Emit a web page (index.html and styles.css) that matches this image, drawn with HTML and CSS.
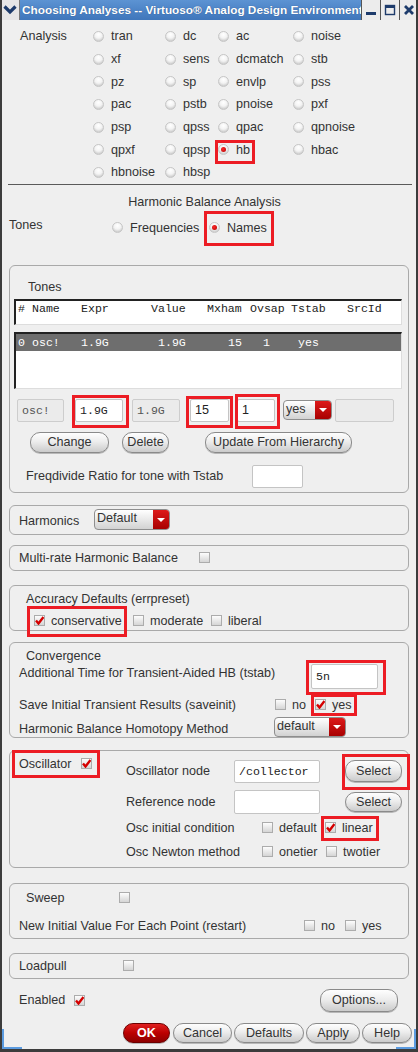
FILE: index.html
```html
<!DOCTYPE html>
<html lang="en">
  <head>
    <meta charset="UTF-8" />
    <meta name="viewport" content="width=device-width, initial-scale=1.0" />
    <title>Choosing Analyses</title>
    <link rel="stylesheet" href="styles.css">
  </head>
  <body>
    <div class="window">
      <!-- Barra de titulo -->
      <div class="titlebar">
        <div class="tb-menu">
          <svg width="14" height="10" viewBox="0 0 14 10"><path d="M1.5 1.5 L7 7 L12.5 1.5" fill="none" stroke="#1d3b6b" stroke-width="3.2"/></svg>
        </div>
        <div class="tb-title">Choosing Analyses -- Virtuoso® Analog Design Environment</div>
        <div class="tb-btn">
          <svg width="12" height="12" viewBox="0 0 12 12"><rect x="1" y="8" width="10" height="3" fill="#1d3b6b"/></svg>
        </div>
        <div class="tb-btn">
          <svg width="12" height="12" viewBox="0 0 12 12"><rect x="1.5" y="1.5" width="9" height="9" fill="none" stroke="#1d3b6b" stroke-width="1.4"/><rect x="1" y="1" width="10" height="3" fill="#1d3b6b"/></svg>
        </div>
        <div class="tb-btn">
          <svg width="12" height="12" viewBox="0 0 12 12"><path d="M2 2 L10 10 M10 2 L2 10" stroke="#1d3b6b" stroke-width="2.8"/></svg>
        </div>
      </div>

      <div class="content">
        <!-- Tipos de analisis -->
        <div class="analysis">
          <div class="analysis-label">Analysis</div>
          <div class="analysis-grid">
            <span class="opt"><span class="radio"></span>tran</span>
            <span class="opt"><span class="radio"></span>dc</span>
            <span class="opt"><span class="radio"></span>ac</span>
            <span class="opt"><span class="radio"></span>noise</span>
            <span class="opt"><span class="radio"></span>xf</span>
            <span class="opt"><span class="radio"></span>sens</span>
            <span class="opt"><span class="radio"></span>dcmatch</span>
            <span class="opt"><span class="radio"></span>stb</span>
            <span class="opt"><span class="radio"></span>pz</span>
            <span class="opt"><span class="radio"></span>sp</span>
            <span class="opt"><span class="radio"></span>envlp</span>
            <span class="opt"><span class="radio"></span>pss</span>
            <span class="opt"><span class="radio"></span>pac</span>
            <span class="opt"><span class="radio"></span>pstb</span>
            <span class="opt"><span class="radio"></span>pnoise</span>
            <span class="opt"><span class="radio"></span>pxf</span>
            <span class="opt"><span class="radio"></span>psp</span>
            <span class="opt"><span class="radio"></span>qpss</span>
            <span class="opt"><span class="radio"></span>qpac</span>
            <span class="opt"><span class="radio"></span>qpnoise</span>
            <span class="opt"><span class="radio"></span>qpxf</span>
            <span class="opt"><span class="radio"></span>qpsp</span>
            <span class="opt mark m-hb"><span class="radio on"></span>hb</span>
            <span class="opt"><span class="radio"></span>hbac</span>
            <span class="opt"><span class="radio"></span>hbnoise</span>
            <span class="opt"><span class="radio"></span>hbsp</span>
          </div>
        </div>

        <div class="sep"></div>

        <div class="hb-title">Harmonic Balance Analysis</div>
        <div class="tones-row">
          <div class="tones-label">Tones</div>
          <span class="opt freq-opt"><span class="radio"></span>Frequencies</span>
          <span class="opt mark m-names"><span class="radio on"></span>Names</span>
        </div>

        <!-- Tabla de tonos -->
        <div class="group tones-box">
          <div class="group-title">Tones</div>
          <div class="list-head">
            <div class="cols">
              <span>#</span><span>Name</span><span>Expr</span><span>Value</span><span>Mxham</span><span>Ovsap</span><span>Tstab</span><span>SrcId</span>
            </div>
          </div>
          <div class="list-body">
            <div class="cols sel">
              <span>0</span><span>osc!</span><span>1.9G</span><span class="c-val">1.9G</span><span class="c-mx">15</span><span class="c-ov">1</span><span class="c-ts">yes</span><span></span>
            </div>
          </div>
          <div class="entry-row">
            <div class="field off w-name">osc!</div>
            <div class="field w-expr mark m-expr">1.9G</div>
            <div class="field off w-val">1.9G</div>
            <div class="field sans w-mx mark m-mx">15</div>
            <div class="field sans w-ov mark m-ov">1</div>
            <div class="combo w-ts"><span class="combo-text">yes</span><span class="combo-arrow"></span></div>
            <div class="field off w-src"></div>
          </div>
          <div class="tone-btns">
            <button class="btn b-change">Change</button>
            <button class="btn b-delete">Delete</button>
            <button class="btn b-update">Update From Hierarchy</button>
          </div>
          <div class="freq-row">
            <span class="freq-label">Freqdivide Ratio for tone with Tstab</span>
            <div class="field w-freq"></div>
          </div>
        </div>

        <div class="group harm-box">
          <span class="harm-label">Harmonics</span>
          <div class="combo w-harm"><span class="combo-text">Default</span><span class="combo-arrow"></span></div>
        </div>

        <div class="group multi-box">
          <span class="multi-label">Multi-rate Harmonic Balance</span>
          <span class="check"></span>
        </div>

        <div class="group acc-box">
          <div class="group-title">Accuracy Defaults (errpreset)</div>
          <div class="acc-row">
            <span class="opt acc-cons mark m-cons"><span class="check on"><svg width="9" height="9" viewBox="0 0 9 9"><path d="M1 4.5 L3.5 7.5 L8.5 1" fill="none" stroke="#d40000" stroke-width="2.4"/></svg></span>conservative</span>
            <span class="opt acc-mod"><span class="check"></span>moderate</span>
            <span class="opt"><span class="check"></span>liberal</span>
          </div>
        </div>

        <!-- Convergencia -->
        <div class="group conv-box">
          <div class="group-title">Convergence</div>
          <div class="conv-row1">
            <span class="conv-label1">Additional Time for Transient-Aided HB (tstab)</span>
            <div class="field w-tstab mark m-tstab">5n</div>
          </div>
          <div class="conv-row2">
            <span class="conv-label2">Save Initial Transient Results (saveinit)</span>
            <span class="opt no-opt"><span class="check"></span>no</span>
            <span class="opt mark m-yes"><span class="check on"><svg width="9" height="9" viewBox="0 0 9 9"><path d="M1 4.5 L3.5 7.5 L8.5 1" fill="none" stroke="#d40000" stroke-width="2.4"/></svg></span>yes</span>
          </div>
          <div class="conv-row3">
            <span class="conv-label3">Harmonic Balance Homotopy Method</span>
            <div class="combo w-homo"><span class="combo-text">default</span><span class="combo-arrow"></span></div>
          </div>
        </div>

        <!-- Oscilador -->
        <div class="group osc-box">
          <div class="osc-left">
            <div class="osc-head mark m-osc">
              <span class="osc-label">Oscillator</span>
              <span class="check on"><svg width="9" height="9" viewBox="0 0 9 9"><path d="M1 4.5 L3.5 7.5 L8.5 1" fill="none" stroke="#d40000" stroke-width="2.4"/></svg></span>
            </div>
          </div>
          <div class="osc-right">
            <div class="osc-row1">
              <span class="osc-node-label">Oscillator node</span>
              <div class="field w-node">/collector</div>
              <button class="btn b-select mark m-select">Select</button>
            </div>
            <div class="osc-row2">
              <span class="osc-node-label">Reference node</span>
              <div class="field w-node tall"></div>
              <button class="btn b-select short">Select</button>
            </div>
            <div class="osc-row3">
              <span class="osc-opt-label">Osc initial condition</span>
              <span class="opt def-opt"><span class="check"></span>default</span>
              <span class="opt mark m-linear"><span class="check on"><svg width="9" height="9" viewBox="0 0 9 9"><path d="M1 4.5 L3.5 7.5 L8.5 1" fill="none" stroke="#d40000" stroke-width="2.4"/></svg></span>linear</span>
            </div>
            <div class="osc-row4">
              <span class="osc-opt-label">Osc Newton method</span>
              <span class="opt one-opt"><span class="check"></span>onetier</span>
              <span class="opt"><span class="check"></span>twotier</span>
            </div>
          </div>
        </div>

        <div class="group sweep-box">
          <div class="sweep-row1">
            <span class="sweep-label">Sweep</span>
            <span class="check"></span>
          </div>
          <div class="sweep-row2">
            <span class="restart-label">New Initial Value For Each Point (restart)</span>
            <span class="opt rno-opt"><span class="check"></span>no</span>
            <span class="opt"><span class="check"></span>yes</span>
          </div>
        </div>

        <div class="group load-box">
          <span class="load-label">Loadpull</span>
          <span class="check"></span>
        </div>

        <div class="enabled-row">
          <span class="enabled-label">Enabled</span>
          <span class="check on"><svg width="9" height="9" viewBox="0 0 9 9"><path d="M1 4.5 L3.5 7.5 L8.5 1" fill="none" stroke="#d40000" stroke-width="2.4"/></svg></span>
          <button class="btn b-options">Options...</button>
        </div>

        <div class="dialog-btns">
          <button class="btn btn-ok">OK</button>
          <button class="btn b-cancel">Cancel</button>
          <button class="btn b-defaults">Defaults</button>
          <button class="btn b-apply">Apply</button>
          <button class="btn b-help">Help</button>
        </div>
      </div>
    </div>
  </body>
</html>
```

FILE: styles.css
```css
*,
*::before,
*::after {
  box-sizing: border-box;
}

body {
  margin: 0;
  background: #ffffff;
  font-family: "Liberation Sans", Arial, sans-serif;
  font-size: 12.6px;
  color: #333333;
}

.window {
  width: 418px;
  height: 1052px;
  background: #efefef;
  border-left: 2px solid #3c3c3c;
  border-right: 2px solid #3c3c3c;
  border-bottom: 3px solid #3c3c3c;
  position: relative;
  overflow: hidden;
}

/* esquinas azules del marco */
.window::before,
.window::after {
  content: "";
  position: absolute;
  bottom: 0;
  width: 20px;
  height: 20px;
  border-bottom: 2px solid #5b9be0;
}

.window::before {
  left: 0;
  border-left: 2px solid #5b9be0;
}

.window::after {
  right: 0;
  border-right: 2px solid #5b9be0;
}

/* titulo */
.titlebar {
  display: flex;
  height: 20px;
  margin: 0 -2px;
  background: #e6e6e6;
}

.tb-menu {
  width: 20px;
  display: flex;
  align-items: center;
  justify-content: center;
  border-right: 1px solid #7a7a7a;
}

.tb-title {
  flex: 1;
  padding-left: 2px;
  background: linear-gradient(#5c93d3, #3f76bb);
  color: #ffffff;
  font-weight: bold;
  font-size: 11.8px;
  line-height: 20px;
  white-space: nowrap;
  overflow: hidden;
  text-shadow: 0 0 1px #2a4f80;
}

.tb-btn {
  width: 19px;
  display: flex;
  align-items: center;
  justify-content: center;
  border-left: 1px solid #555555;
  background: #ececec;
}

/* opciones */
.opt {
  display: flex;
  align-items: center;
  white-space: nowrap;
}

.radio {
  flex: none;
  position: relative;
  width: 11px;
  height: 11px;
  margin-right: 7px;
  border-radius: 50%;
  border: 1px solid #c6c6c6;
  background: radial-gradient(circle at 50% 30%, #ffffff 0%, #f3f3f3 45%, #b9b9b9 100%);
}

.radio.on::after {
  content: "";
  position: absolute;
  left: 2px;
  top: 2px;
  width: 5px;
  height: 5px;
  border-radius: 50%;
  background: radial-gradient(circle at 40% 40%, #ff2a2a, #b00000);
}

.check {
  flex: none;
  display: inline-flex;
  align-items: center;
  justify-content: center;
  width: 11px;
  height: 11px;
  margin-right: 6px;
  border: 1px solid #acacac;
  background: linear-gradient(#fdfdfd, #d5d5d5);
}

.check svg {
  display: block;
}

/* marcas rojas de anotacion */
.mark {
  position: relative;
}

.mark::after {
  content: "";
  position: absolute;
  border: 3px solid #ec1c24;
  pointer-events: none;
}

.m-hb::after { left: -3px; top: 2px; width: 40px; height: 24px; }
.m-names::after { left: -5px; top: -6px; width: 70px; height: 35px; }
.m-expr::after { left: -4px; top: -5px; width: 57px; height: 33px; }
.m-mx::after { left: -5px; top: -4px; width: 47px; height: 32px; }
.m-ov::after { left: -3px; top: -6px; width: 45px; height: 35px; }
.m-cons::after { left: -7px; top: -7px; width: 100px; height: 31px; }
.m-tstab::after { left: -6px; top: -5px; width: 80px; height: 35px; }
.m-yes::after { left: -4px; top: -3px; width: 46px; height: 22px; }
.m-osc::after { left: -7px; top: -7px; width: 88px; height: 28px; }
.m-select::after { left: -4px; top: -7px; width: 68px; height: 36px; }
.m-linear::after { left: -4px; top: -5px; width: 58px; height: 25px; }

/* analisis */
.analysis {
  display: flex;
  padding: 5px 0 0 18px;
}

.analysis-label {
  width: 73px;
  line-height: 22.7px;
}

.analysis-grid {
  display: grid;
  grid-template-columns: 72px 53px 75px 1fr;
  grid-auto-rows: 22.7px;
  flex: 1;
}

.sep {
  margin: 0 4px 0 6px;
  border-top: 1px solid #5a5a5a;
}

.hb-title {
  margin-top: 10px;
  padding-right: 9px;
  line-height: 15px;
  text-align: center;
}

.tones-row {
  display: flex;
  height: 22px;
  margin-top: 7px;
  padding-left: 7px;
}

.tones-label {
  width: 103px;
  line-height: 16px;
}

.freq-opt {
  width: 97px;
}

/* grupos */
.group {
  margin: 0 7px;
  border: 1px solid #a9a9a9;
  border-radius: 6px;
}

.group-title {
  line-height: 14px;
  margin: 6px 0 0 16px;
}

.tones-box {
  height: 228px;
  margin-top: 26px;
}

.tones-box .group-title {
  margin: 14px 0 0 18px;
}

.list-head,
.list-body {
  width: 388px;
  margin-left: 4px;
  background: #ffffff;
  border-top: 2px solid #222222;
  border-left: 2px solid #222222;
  border-right: 1px solid #dddddd;
  border-bottom: 1px solid #dddddd;
}

.list-head {
  height: 26px;
  margin-top: 5px;
  padding: 1px 0 0 2px;
}

.list-body {
  height: 57px;
  margin-top: 7px;
}

.cols {
  display: grid;
  grid-template-columns: 14px 49px 70px 56px 43px 41px 56px 1fr;
  font-family: "Liberation Mono", monospace;
  font-size: 11.6px;
  line-height: 14px;
  color: #222222;
  white-space: pre;
}

.cols.sel {
  height: 17px;
  padding-left: 2px;
  line-height: 17px;
  background: #6e6e6e;
  color: #ffffff;
}

.c-val { padding-left: 7px; }
.c-mx { padding-left: 21px; }
.c-ov { padding-left: 13px; }
.c-ts { padding-left: 7px; }

.field {
  flex: none;
  height: 23px;
  padding-left: 4px;
  background: #ffffff;
  border: 1px solid #c4c4c4;
  border-radius: 2px;
  font-family: "Liberation Mono", monospace;
  font-size: 11.6px;
  line-height: 21px;
  color: #222222;
}

.field.off {
  background: #ebebeb;
  border-color: #cdcdcd;
  color: #555555;
}

.field.sans {
  font-family: "Liberation Sans", Arial, sans-serif;
  font-size: 12.6px;
}

.entry-row {
  display: flex;
  align-items: center;
  height: 23px;
  margin-top: 10px;
  padding-left: 7px;
}

.w-name { width: 47px; margin-right: 11px; }
.w-expr { width: 48px; margin-right: 9px; }
.w-val { width: 48px; margin-right: 10px; }
.w-mx { width: 39px; margin-right: 8px; }
.w-ov { width: 38px; margin-right: 8px; }
.w-ts { width: 49px; margin-right: 3px; }
.w-src { width: 59px; }

.combo {
  flex: none;
  display: flex;
  height: 20px;
  border: 1px solid #8e8e8e;
  border-radius: 4px;
  overflow: hidden;
  background: linear-gradient(#ffffff, #e9e9e9 50%, #d2d2d2);
}

.combo-text {
  flex: 1;
  padding-left: 2px;
  line-height: 17px;
}

.combo-arrow {
  width: 16px;
  display: flex;
  align-items: center;
  justify-content: center;
  background: linear-gradient(#dd1a1a, #a80000);
}

.combo-arrow::before {
  content: "";
  border-left: 4px solid transparent;
  border-right: 4px solid transparent;
  border-top: 4px solid #ffffff;
}

.btn {
  flex: none;
  height: 21px;
  padding: 0;
  border: 1px solid #8a8a8a;
  border-radius: 10px;
  background: linear-gradient(#fefefe, #ededed 45%, #cbcbcb);
  box-shadow: 0 1px 0 #b8b8b8;
  font: inherit;
  color: #333333;
  line-height: 19px;
  text-align: center;
}

.tone-btns {
  display: flex;
  height: 21px;
  margin-top: 10px;
  padding-left: 20px;
}

.b-change { width: 79px; margin-right: 13px; }
.b-delete { width: 47px; margin-right: 36px; }
.b-update { width: 147px; }

.freq-row {
  display: flex;
  align-items: center;
  height: 23px;
  margin-top: 12px;
  padding-left: 16px;
}

.freq-label { width: 226px; }
.w-freq { width: 51px; }

.harm-box {
  display: flex;
  align-items: center;
  height: 30px;
  margin-top: 12px;
  padding-left: 9px;
}

.harm-label {
  width: 75px;
  padding-top: 3px;
}

.w-harm {
  width: 76px;
  height: 21px;
}

.multi-box {
  display: flex;
  align-items: center;
  height: 26px;
  margin-top: 10px;
  padding-left: 9px;
}

.multi-label { width: 180px; }

.acc-box {
  height: 46px;
  margin-top: 14px;
}

.acc-row {
  display: flex;
  height: 16px;
  margin-top: 7px;
  padding-left: 24px;
}

.acc-cons { width: 99px; }
.acc-mod { width: 78px; }

.conv-box {
  height: 96px;
  margin-top: 11px;
}

.conv-row1 {
  display: flex;
  height: 25px;
  margin-top: 1px;
  padding-left: 9px;
}

.conv-label1 {
  width: 292px;
  line-height: 18px;
}

.w-tstab {
  width: 67px;
  height: 25px;
  line-height: 23px;
}

.conv-row2 {
  display: flex;
  height: 16px;
  margin-top: 8px;
  padding-left: 9px;
}

.conv-label2 {
  width: 256px;
  line-height: 16px;
}

.no-opt { width: 40px; }

.conv-row3 {
  display: flex;
  height: 20px;
  margin-top: 4px;
  padding-left: 9px;
}

.conv-label3 {
  width: 255px;
  line-height: 24px;
}

.w-homo { width: 72px; }

.osc-box {
  display: flex;
  height: 118px;
  margin-top: 12px;
}

.osc-left {
  width: 116px;
  padding: 6px 0 0 9px;
}

.osc-head {
  display: flex;
  align-items: center;
  height: 14px;
}

.osc-label { width: 62px; }

.osc-right {
  display: flex;
  flex-direction: column;
}

.osc-row1,
.osc-row2,
.osc-row3,
.osc-row4 {
  display: flex;
  align-items: center;
}

.osc-row1 { height: 23px; margin-top: 9px; }
.osc-row2 { height: 24px; margin-top: 7px; }
.osc-row3 { height: 16px; margin-top: 6px; }
.osc-row4 { height: 16px; margin-top: 8px; }

.osc-node-label { width: 108px; }

.w-node {
  width: 86px;
  margin-right: 25px;
}

.w-node.tall { height: 24px; }

.b-select { width: 57px; height: 22px; line-height: 20px; }
.b-select.short { height: 20px; line-height: 18px; }

.osc-opt-label { width: 136px; }
.def-opt { width: 63px; }
.one-opt { width: 64px; }

.sweep-box {
  height: 56px;
  margin-top: 15px;
}

.sweep-row1 {
  display: flex;
  align-items: center;
  height: 14px;
  margin-top: 7px;
  padding-left: 16px;
}

.sweep-label { width: 93px; }

.sweep-row2 {
  display: flex;
  height: 16px;
  margin-top: 13px;
  padding-left: 9px;
}

.restart-label {
  width: 285px;
  line-height: 16px;
}

.rno-opt { width: 41px; }

.load-box {
  display: flex;
  align-items: center;
  height: 26px;
  margin-top: 14px;
  padding-left: 9px;
}

.load-label { width: 104px; }

.enabled-row {
  display: flex;
  align-items: center;
  height: 23px;
  margin-top: 10px;
  padding: 0 18px 0 17px;
}

.enabled-label { width: 55px; }

.b-options {
  width: 78px;
  height: 23px;
  margin-left: auto;
  line-height: 21px;
}

.dialog-btns {
  display: flex;
  justify-content: flex-end;
  gap: 2px;
  height: 20px;
  margin-top: 11px;
  padding-right: 4px;
}

.dialog-btns .btn {
  height: 20px;
  line-height: 18px;
}

.btn-ok {
  width: 47px;
  margin-right: 1px;
  border-color: #6d0000;
  background: linear-gradient(#e02020, #bb0000 50%, #8e0000);
  color: #ffffff;
  font-weight: bold;
}

.b-cancel { width: 59px; }
.b-defaults { width: 70px; }
.b-apply { width: 54px; }
.b-help { width: 50px; }
```
